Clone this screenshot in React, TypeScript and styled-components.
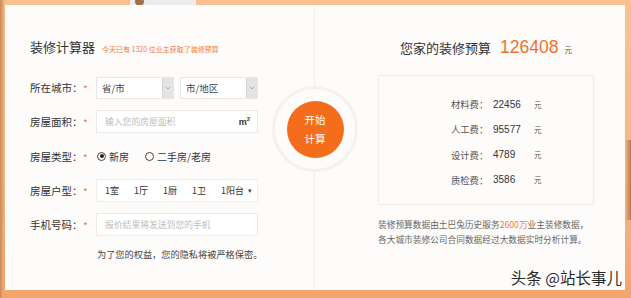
import styled, { createGlobalStyle } from "styled-components";
import { ChevronDown } from "lucide-react";

const GlobalStyle = createGlobalStyle`
  html, body { margin: 0; padding: 0; }
  body {
    font-family: "Noto Sans CJK SC", "Liberation Sans", sans-serif;
    color: #333;
  }
`;

const App: React.FC = () => {
  return (
    <Page>
      <GlobalStyle />
      <TopTab />
      <Card>
        <LeftPane>
          <TitleRow>
            <Title>装修计算器</Title>
            <Hint>今天已有 1320 位业主获取了装修预算</Hint>
          </TitleRow>
          <Form>
            <Row>
              <Label>所在城市：</Label>
              <Star>*</Star>
              <Selects>
                <Select>
                  <SelectText>省/市</SelectText>
                  <Arrow>
                    <ChevronDown size={8} strokeWidth={1.5} />
                  </Arrow>
                </Select>
                <Select>
                  <SelectText>市/地区</SelectText>
                  <Arrow>
                    <ChevronDown size={8} strokeWidth={1.5} />
                  </Arrow>
                </Select>
              </Selects>
            </Row>
            <Row>
              <Label>房屋面积：</Label>
              <Star>*</Star>
              <Field>
                <Placeholder>输入您的房屋面积</Placeholder>
                <Unit>
                  m<sup>2</sup>
                </Unit>
              </Field>
            </Row>
            <Row>
              <Label>房屋类型：</Label>
              <Star>*</Star>
              <Radios>
                <Radio>
                  <RadioDot checked />
                  新房
                </Radio>
                <Radio>
                  <RadioDot />
                  二手房/老房
                </Radio>
              </Radios>
            </Row>
            <Row>
              <Label>房屋户型：</Label>
              <Star>*</Star>
              <Layout>
                <Room>1室</Room>
                <Room>1厅</Room>
                <Room>1厨</Room>
                <Room>1卫</Room>
                <Room>1阳台</Room>
                <Caret>▾</Caret>
              </Layout>
            </Row>
            <Row>
              <Label>手机号码：</Label>
              <Star>*</Star>
              <Field>
                <Placeholder>报价结果将发送到您的手机</Placeholder>
              </Field>
            </Row>
          </Form>
          <Privacy>为了您的权益，您的隐私将被严格保密。</Privacy>
        </LeftPane>

        <RightPane>
          <BudgetRow>
            <BudgetTitle>您家的装修预算</BudgetTitle>
            <BudgetNum>126408</BudgetNum>
            <Yuan>元</Yuan>
          </BudgetRow>
          <CostBox>
            <CostRow>
              <CostLabel>材料费：</CostLabel>
              <CostValue>22456</CostValue>
              <Yuan>元</Yuan>
            </CostRow>
            <CostRow>
              <CostLabel>人工费：</CostLabel>
              <CostValue>95577</CostValue>
              <Yuan>元</Yuan>
            </CostRow>
            <CostRow>
              <CostLabel>设计费：</CostLabel>
              <CostValue>4789</CostValue>
              <Yuan>元</Yuan>
            </CostRow>
            <CostRow>
              <CostLabel>质检费：</CostLabel>
              <CostValue>3586</CostValue>
              <Yuan>元</Yuan>
            </CostRow>
          </CostBox>
          <Note>
            装修预算数据由土巴兔历史服务<em>2600万</em>业主装修数据，
            <br />
            各大城市装修公司合同数据经过大数据实时分析计算。
          </Note>
        </RightPane>

        <StartRing>
          <StartBtn>
            开始
            <br />
            计算
          </StartBtn>
        </StartRing>

        <Watermark>头条 @站长事儿</Watermark>
      </Card>
    </Page>
  );
};

const Page = styled.div`
  position: relative;
  width: 631px;
  height: 298px;
  box-sizing: border-box;
  padding: 5px 6px 8px 5px;
  overflow: hidden;
  background:
    linear-gradient(90deg, #c98a5c 0px, #e9a774 3px, transparent 5px),
    linear-gradient(270deg, #b9784c 0px, #e6a06c 4px, transparent 6px) right 140px / 100% 80px no-repeat,
    linear-gradient(180deg, #f9c190 0%, #f7b682 60%, #f4a46b 100%);
`;

const TopTab = styled.div`
  position: absolute;
  top: 0;
  left: 130px;
  width: 66px;
  height: 5px;
  background: #ececec;
  &::before {
    content: "";
    position: absolute;
    left: 4px;
    top: -4px;
    width: 9px;
    height: 9px;
    border-radius: 50%;
    background: #a0724f;
    border: 1px solid #f3f3f3;
  }
`;

const Card = styled.div`
  position: relative;
  height: 285px;
  display: grid;
  grid-template-columns: 310px 1fr;
  background: #fefcfb;
`;

const LeftPane = styled.div`
  padding: 32px 0 0 25px;
  border-right: 1px solid #f1eeec;
`;

const TitleRow = styled.div`
  display: flex;
  align-items: baseline;
  gap: 7px;
  height: 20px;
  line-height: 20px;
`;

const Title = styled.h1`
  margin: 0;
  font-size: 13px;
  font-weight: 400;
  color: #333;
`;

const Hint = styled.span`
  font-size: 7px;
  color: #f07a3a;
`;

const Form = styled.div`
  display: flex;
  flex-direction: column;
  gap: 11.3px;
  margin-top: 19px;
`;

const Row = styled.div`
  display: flex;
  align-items: center;
  height: 23px;
`;

const Label = styled.span`
  width: 53px;
  flex-shrink: 0;
  white-space: nowrap;
  font-size: 10.5px;
  color: #333;
`;

const Star = styled.span`
  width: 13px;
  flex-shrink: 0;
  font-size: 10px;
  color: #f07a3a;
  padding-top: 2px;
`;

const Selects = styled.div`
  display: flex;
  gap: 6px;
`;

const Select = styled.div`
  width: 78px;
  height: 22px;
  box-sizing: border-box;
  display: flex;
  align-items: center;
  justify-content: space-between;
  border: 1px solid #e8e6e4;
  background: #fff;
`;

const SelectText = styled.span`
  padding-left: 5px;
  font-size: 9.5px;
  color: #444;
`;

const Arrow = styled.span`
  width: 10px;
  height: 20px;
  display: flex;
  align-items: center;
  justify-content: center;
  background: #e4e4e4;
  border-left: 1px solid #d4d4d4;
  color: #777;
`;

const Field = styled.div`
  width: 162px;
  height: 23px;
  box-sizing: border-box;
  display: flex;
  align-items: center;
  justify-content: space-between;
  padding: 0 7px 0 8px;
  border: 1px solid #eceae8;
  background: #fff;
`;

const Placeholder = styled.span`
  font-size: 8.8px;
  color: #bdbdbd;
`;

const Unit = styled.span`
  font-family: "Liberation Sans", sans-serif;
  font-size: 9px;
  font-weight: 700;
  color: #333;
  sup {
    font-size: 6px;
  }
`;

const Radios = styled.div`
  display: flex;
  gap: 16px;
  padding-left: 1px;
`;

const Radio = styled.label`
  display: flex;
  align-items: center;
  gap: 3px;
  font-size: 10px;
  color: #333;
`;

const RadioDot = styled.span<{ checked?: boolean }>`
  width: 9px;
  height: 9px;
  box-sizing: border-box;
  border-radius: 50%;
  border: 1px solid #444;
  display: flex;
  align-items: center;
  justify-content: center;
  &::after {
    content: "";
    width: 4px;
    height: 4px;
    border-radius: 50%;
    background: ${(p) => (p.checked ? "#222" : "transparent")};
  }
`;

const Layout = styled.div`
  width: 162px;
  height: 23px;
  box-sizing: border-box;
  display: flex;
  align-items: center;
  padding: 0 5px 0 8px;
  border: 1px solid #f0eeec;
  background: #fff;
  font-size: 9px;
  color: #333;
`;

const Room = styled.span`
  margin-right: 15px;
  &:nth-of-type(5) {
    margin-right: 0;
  }
`;

const Caret = styled.span`
  margin-left: auto;
  font-size: 7px;
  color: #444;
`;

const Privacy = styled.p`
  margin: 11px 0 0 67px;
  font-size: 9.2px;
  line-height: 14px;
  color: #444;
`;

const RightPane = styled.div`
  padding: 32px 0 0 63px;
`;

const BudgetRow = styled.div`
  display: flex;
  align-items: baseline;
  height: 20px;
  line-height: 20px;
  padding-left: 22px;
`;

const BudgetTitle = styled.span`
  font-size: 13px;
  color: #333;
`;

const BudgetNum = styled.span`
  margin: 0 6px 0 9px;
  font-family: "Liberation Sans", sans-serif;
  font-size: 17.5px;
  color: #f0702a;
`;

const Yuan = styled.span`
  font-size: 7.5px;
  color: #555;
`;

const CostBox = styled.div`
  width: 216px;
  height: 130px;
  box-sizing: border-box;
  margin-top: 18px;
  padding: 19px 0 0 72px;
  border: 1px solid #efedeb;
  display: flex;
  flex-direction: column;
  gap: 7.3px;
`;

const CostRow = styled.div`
  display: grid;
  grid-template-columns: 42px 41px auto;
  align-items: center;
  height: 18px;
`;

const CostLabel = styled.span`
  font-size: 9.3px;
  color: #555;
`;

const CostValue = styled.span`
  font-family: "Liberation Sans", sans-serif;
  font-size: 10px;
  color: #333;
`;

const Note = styled.p`
  margin: 12px 0 0;
  font-size: 8.7px;
  line-height: 15px;
  color: #666;
  white-space: nowrap;
  em {
    font-style: normal;
    color: #f07a3a;
  }
`;

const StartRing = styled.div`
  position: absolute;
  left: 267px;
  top: 81px;
  width: 86px;
  height: 86px;
  box-sizing: border-box;
  border-radius: 50%;
  border: 3px solid #f4f1ef;
  background: #fefcfb;
  display: flex;
  align-items: center;
  justify-content: center;
`;

const StartBtn = styled.button`
  width: 57px;
  height: 57px;
  border: none;
  border-radius: 50%;
  background: #f46d1c;
  color: #fff;
  font-family: "Noto Sans CJK SC", sans-serif;
  font-size: 10.5px;
  line-height: 19px;
  padding: 0;
`;

const Watermark = styled.span`
  position: absolute;
  right: 3px;
  bottom: 2px;
  font-size: 15.5px;
  color: #2a2a2a;
  text-shadow: 0 0 2px #fff, 0 0 2px #fff;
`;

export default App;
